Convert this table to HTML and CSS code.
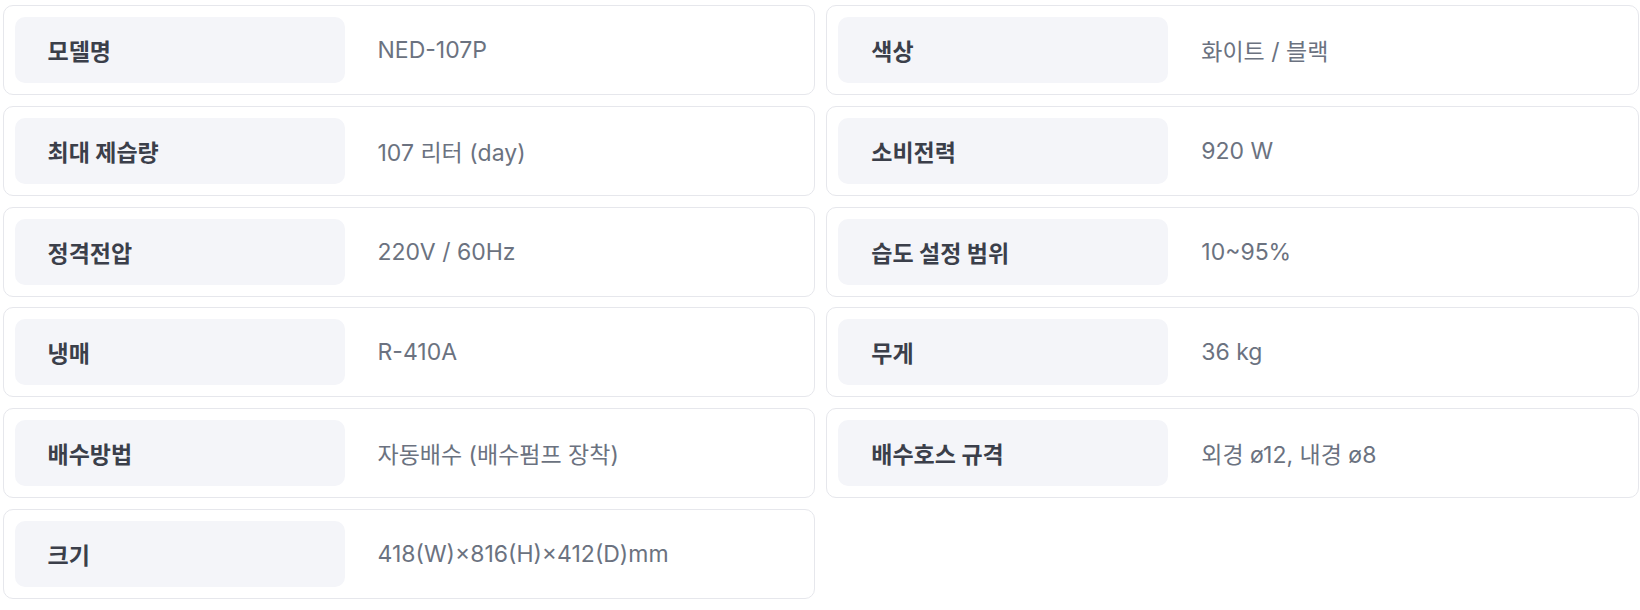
FILE: index.html
```html
<!DOCTYPE html>
<html lang="ko">
<head>
<meta charset="utf-8">
<title>제품 사양</title>
<link rel="stylesheet" href="styles.css">
</head>
<body>
<div class="spec-grid">
  <div class="spec-card"><div class="spec-label">모델명</div><div class="spec-value">NED-107P</div></div>
  <div class="spec-card"><div class="spec-label">색상</div><div class="spec-value">화이트 / 블랙</div></div>
  <div class="spec-card"><div class="spec-label">최대 제습량</div><div class="spec-value">107 리터 (day)</div></div>
  <div class="spec-card"><div class="spec-label">소비전력</div><div class="spec-value">920 W</div></div>
  <div class="spec-card"><div class="spec-label">정격전압</div><div class="spec-value">220V / 60Hz</div></div>
  <div class="spec-card"><div class="spec-label">습도 설정 범위</div><div class="spec-value">10~95%</div></div>
  <div class="spec-card"><div class="spec-label">냉매</div><div class="spec-value">R-410A</div></div>
  <div class="spec-card"><div class="spec-label">무게</div><div class="spec-value">36 kg</div></div>
  <div class="spec-card"><div class="spec-label">배수방법</div><div class="spec-value">자동배수 (배수펌프 장착)</div></div>
  <div class="spec-card"><div class="spec-label">배수호스 규격</div><div class="spec-value">외경 ø12, 내경 ø8</div></div>
  <div class="spec-card"><div class="spec-label">크기</div><div class="spec-value">418(W)×816(H)×412(D)mm</div></div>
</div>
</body>
</html>
```
FILE: styles.css
```css
* { box-sizing: border-box; }
html, body { margin: 0; padding: 0; background: #ffffff; }
body {
  font-family: "Inter", "Noto Sans CJK KR", sans-serif;
}
.spec-grid {
  display: grid;
  grid-template-columns: 1fr 1fr;
  column-gap: 11.6px;
  row-gap: 10.8px;
  padding: 5px 1.5px 0 2.5px;
}
.spec-card {
  display: flex;
  align-items: center;
  height: 90px;
  padding: 11px;
  border: 1px solid #e6e7ec;
  border-radius: 10px;
  background: #ffffff;
}
.spec-label {
  flex: 0 0 330px;
  height: 66px;
  display: flex;
  align-items: center;
  padding-left: 33px;
  background: #f4f5f9;
  border-radius: 10px;
  font-size: 23px;
  font-weight: 700;
  color: #3b3f4a;
}
.spec-value {
  padding-left: 33px;
  font-size: 23px;
  color: #6b7280;
}
```
